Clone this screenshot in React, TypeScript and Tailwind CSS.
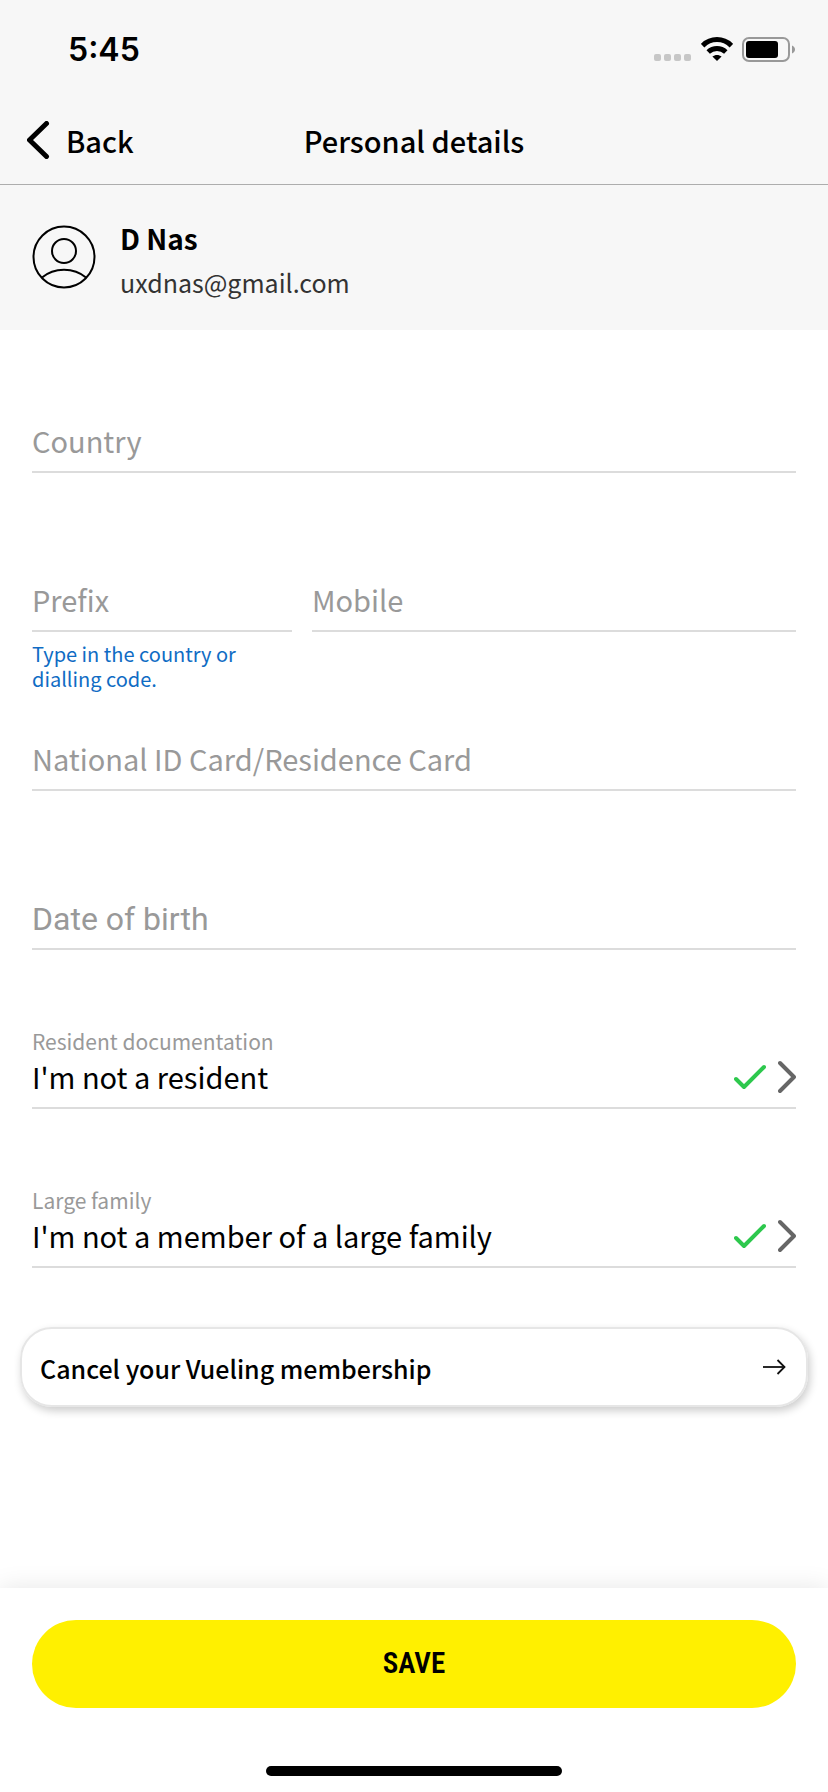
import { useId, useState } from 'react'
import type { ReactNode } from 'react'
import clsx from 'clsx'

type FieldProps = {
  label: string
  type?: string
  hint?: string
  className?: string
  labelClassName?: string
}

// Label sits on the line while the field is empty and floats up once it has a value
function Field({ label, type = 'text', hint, className, labelClassName = 'text-[29px] leading-10' }: FieldProps) {
  const id = useId()
  const [value, setValue] = useState('')

  return (
    <div className={clsx('min-h-[159px] pt-[19px]', className)}>
      <div className="grid grid-cols-1 grid-rows-[28px_51px] border-b-2 border-[#dcdcdc]">
        <label
          htmlFor={id}
          className={clsx(
            'col-start-1 text-[#999999]',
            value ? 'row-start-1 text-[21px] leading-[26px]' : ['row-start-2', labelClassName]
          )}
        >
          {label}
        </label>
        <input
          id={id}
          type={type}
          value={value}
          onChange={e => setValue(e.target.value)}
          aria-describedby={hint ? `${id}-hint` : undefined}
          className="col-start-1 row-start-2 w-full min-w-0 bg-transparent pb-2 text-[29px] text-black outline-none"
        />
      </div>
      {hint && (
        <p id={`${id}-hint`} className="pt-[9px] text-[20px] leading-[25px] text-[#0f6cc4]">
          {hint}
        </p>
      )}
    </div>
  )
}

function PickerRow({ label, value }: { label: string; value: string }) {
  return (
    <div className="min-h-[159px] pt-[19px]">
      <button type="button" className="flex w-full items-end justify-between border-b-2 border-[#dcdcdc] text-left">
        <span className="flex flex-col">
          <span className="h-7 text-[21px] leading-[26px] text-[#999999]">{label}</span>
          <span className="h-[51px] text-[29px] leading-10 text-black">{value}</span>
        </span>
        <span className="flex items-center gap-3 pb-[13px]">
          <CheckIcon />
          <ChevronRightIcon />
        </span>
      </button>
    </div>
  )
}

function CheckIcon() {
  return (
    <svg width="32" height="34" viewBox="0 0 32 34" fill="none" stroke="#2dc84d" strokeWidth="4" strokeLinecap="round" strokeLinejoin="round" aria-hidden="true">
      <path d="M2 19L10 27L30 7" />
    </svg>
  )
}

function ChevronRightIcon() {
  return (
    <svg width="18" height="34" viewBox="0 0 18 34" fill="none" stroke="#666666" strokeWidth="4" strokeLinecap="round" strokeLinejoin="round" aria-hidden="true">
      <path d="M2 3L16 17L2 31" />
    </svg>
  )
}

function StatusBar() {
  return (
    <div className="flex h-24 items-center justify-between pl-[68px] pr-[33px] pt-1">
      <span className="font-['Inter',sans-serif] text-[32px] font-semibold leading-10">5:45</span>
      <div className="flex items-center gap-[9px] pb-0.5">
        <svg width="38" height="24" viewBox="0 0 38 24" fill="#c7c7c7" aria-hidden="true">
          <rect x="0" y="17" width="7" height="7" rx="2" />
          <rect x="10" y="17" width="7" height="7" rx="2" />
          <rect x="20" y="17" width="7" height="7" rx="2" />
          <rect x="30" y="17" width="7" height="7" rx="2" />
        </svg>
        <svg width="32" height="24" viewBox="0 0 32 24" fill="none" stroke="#000" strokeWidth="5" aria-hidden="true">
          <path d="M1.6 8.6C9.8 0.6 22.2 0.6 30.4 8.6" />
          <path d="M7.2 15C12.2 10.4 19.8 10.4 24.8 15" />
          <path d="M16 24L11.4 19.6C14 17.4 18 17.4 20.6 19.6Z" fill="#000" stroke="none" />
        </svg>
        <svg width="53" height="25" viewBox="0 0 53 25" fill="none" aria-hidden="true">
          <rect x="1" y="1" width="46" height="23" rx="6" stroke="#999999" strokeWidth="2" />
          <rect x="4" y="4" width="32" height="17" rx="3" fill="#000" />
          <path d="M50 8.5C54 10 54 15 50 16.5Z" fill="#999999" />
        </svg>
      </div>
    </div>
  )
}

function Header({ children }: { children: ReactNode }) {
  return (
    <header className="border-b border-[#adadad]">
      <StatusBar />
      <div className="grid h-[88px] grid-cols-[1fr_auto_1fr] items-center px-[27px]">
        <button type="button" className="flex items-center gap-4 justify-self-start text-[29px] font-medium leading-10">
          <svg width="23" height="38" viewBox="0 0 23 38" fill="none" stroke="#000" strokeWidth="5" strokeLinecap="round" strokeLinejoin="round" aria-hidden="true">
            <path d="M19.5 2.5L2.5 19L19.5 35.5" />
          </svg>
          Back
        </button>
        <h1 className="text-[29px] font-medium leading-10">{children}</h1>
      </div>
    </header>
  )
}

function App() {
  return (
    <div className="flex min-h-screen flex-col bg-white font-['Noto_Sans_CJK_SC',sans-serif] text-black">
      <div className="bg-[#f7f7f7]">
        <Header>Personal details</Header>
        <section className="flex h-[145px] items-center gap-6 px-8">
          <svg className="mb-0.5" width="64" height="64" viewBox="0 0 64 64" fill="none" stroke="#000" strokeWidth="2" aria-hidden="true">
            <circle cx="32" cy="32" r="30.5" />
            <circle cx="32" cy="26" r="12" />
            <path d="M10 52.5C22 42 42 42 54 52.5" />
          </svg>
          <div className="flex flex-col pt-1">
            <span className="text-[28px] font-bold leading-[44px]">D Nas</span>
            <span className="text-[25px] leading-[44px] text-[#333333]">uxdnas@gmail.com</span>
          </div>
        </section>
      </div>

      <form id="details" className="flex flex-col px-8 pt-[43px]" onSubmit={e => e.preventDefault()}>
        <Field label="Country" />
        <div className="flex gap-5">
          <Field label="Prefix" hint="Type in the country or dialling code." className="w-[260px]" />
          <Field label="Mobile" type="tel" className="flex-1" />
        </div>
        <Field label="National ID Card/Residence Card" />
        <Field label="Date of birth" labelClassName="font-['Roboto',sans-serif] text-[32px] leading-[44px]" />
        <PickerRow label="Resident documentation" value="I'm not a resident" />
        <PickerRow label="Large family" value="I'm not a member of a large family" />
      </form>

      <div className="px-5">
        <button
          type="button"
          className="flex h-20 w-full items-center justify-between rounded-[32px] border-2 border-[#e6e6e6] px-[18px] text-[25px] font-medium shadow-[2px_4px_8px_rgba(0,0,0,0.2)]"
        >
          <span className="pt-1">Cancel your Vueling membership</span>
          <svg className="mr-0.5" width="24" height="16" viewBox="0 0 24 16" fill="none" stroke="#111" strokeWidth="1.8" aria-hidden="true">
            <path d="M1 8H23" />
            <path d="M15.5 1L22.5 8L15.5 15" />
          </svg>
        </button>
      </div>

      <footer className="mt-auto flex flex-col items-center bg-white px-8 pb-4 pt-8 shadow-[0_0_24px_rgba(0,0,0,0.1)]">
        <button
          type="submit"
          form="details"
          className="h-[88px] w-full rounded-full bg-[#fff000] font-['Roboto_Condensed','Liberation_Sans_Narrow',sans-serif] text-[29px] font-semibold"
        >
          SAVE
        </button>
        <div className="mt-[58px] h-2.5 w-[296px] rounded-full bg-black" />
      </footer>
    </div>
  )
}

export default App
